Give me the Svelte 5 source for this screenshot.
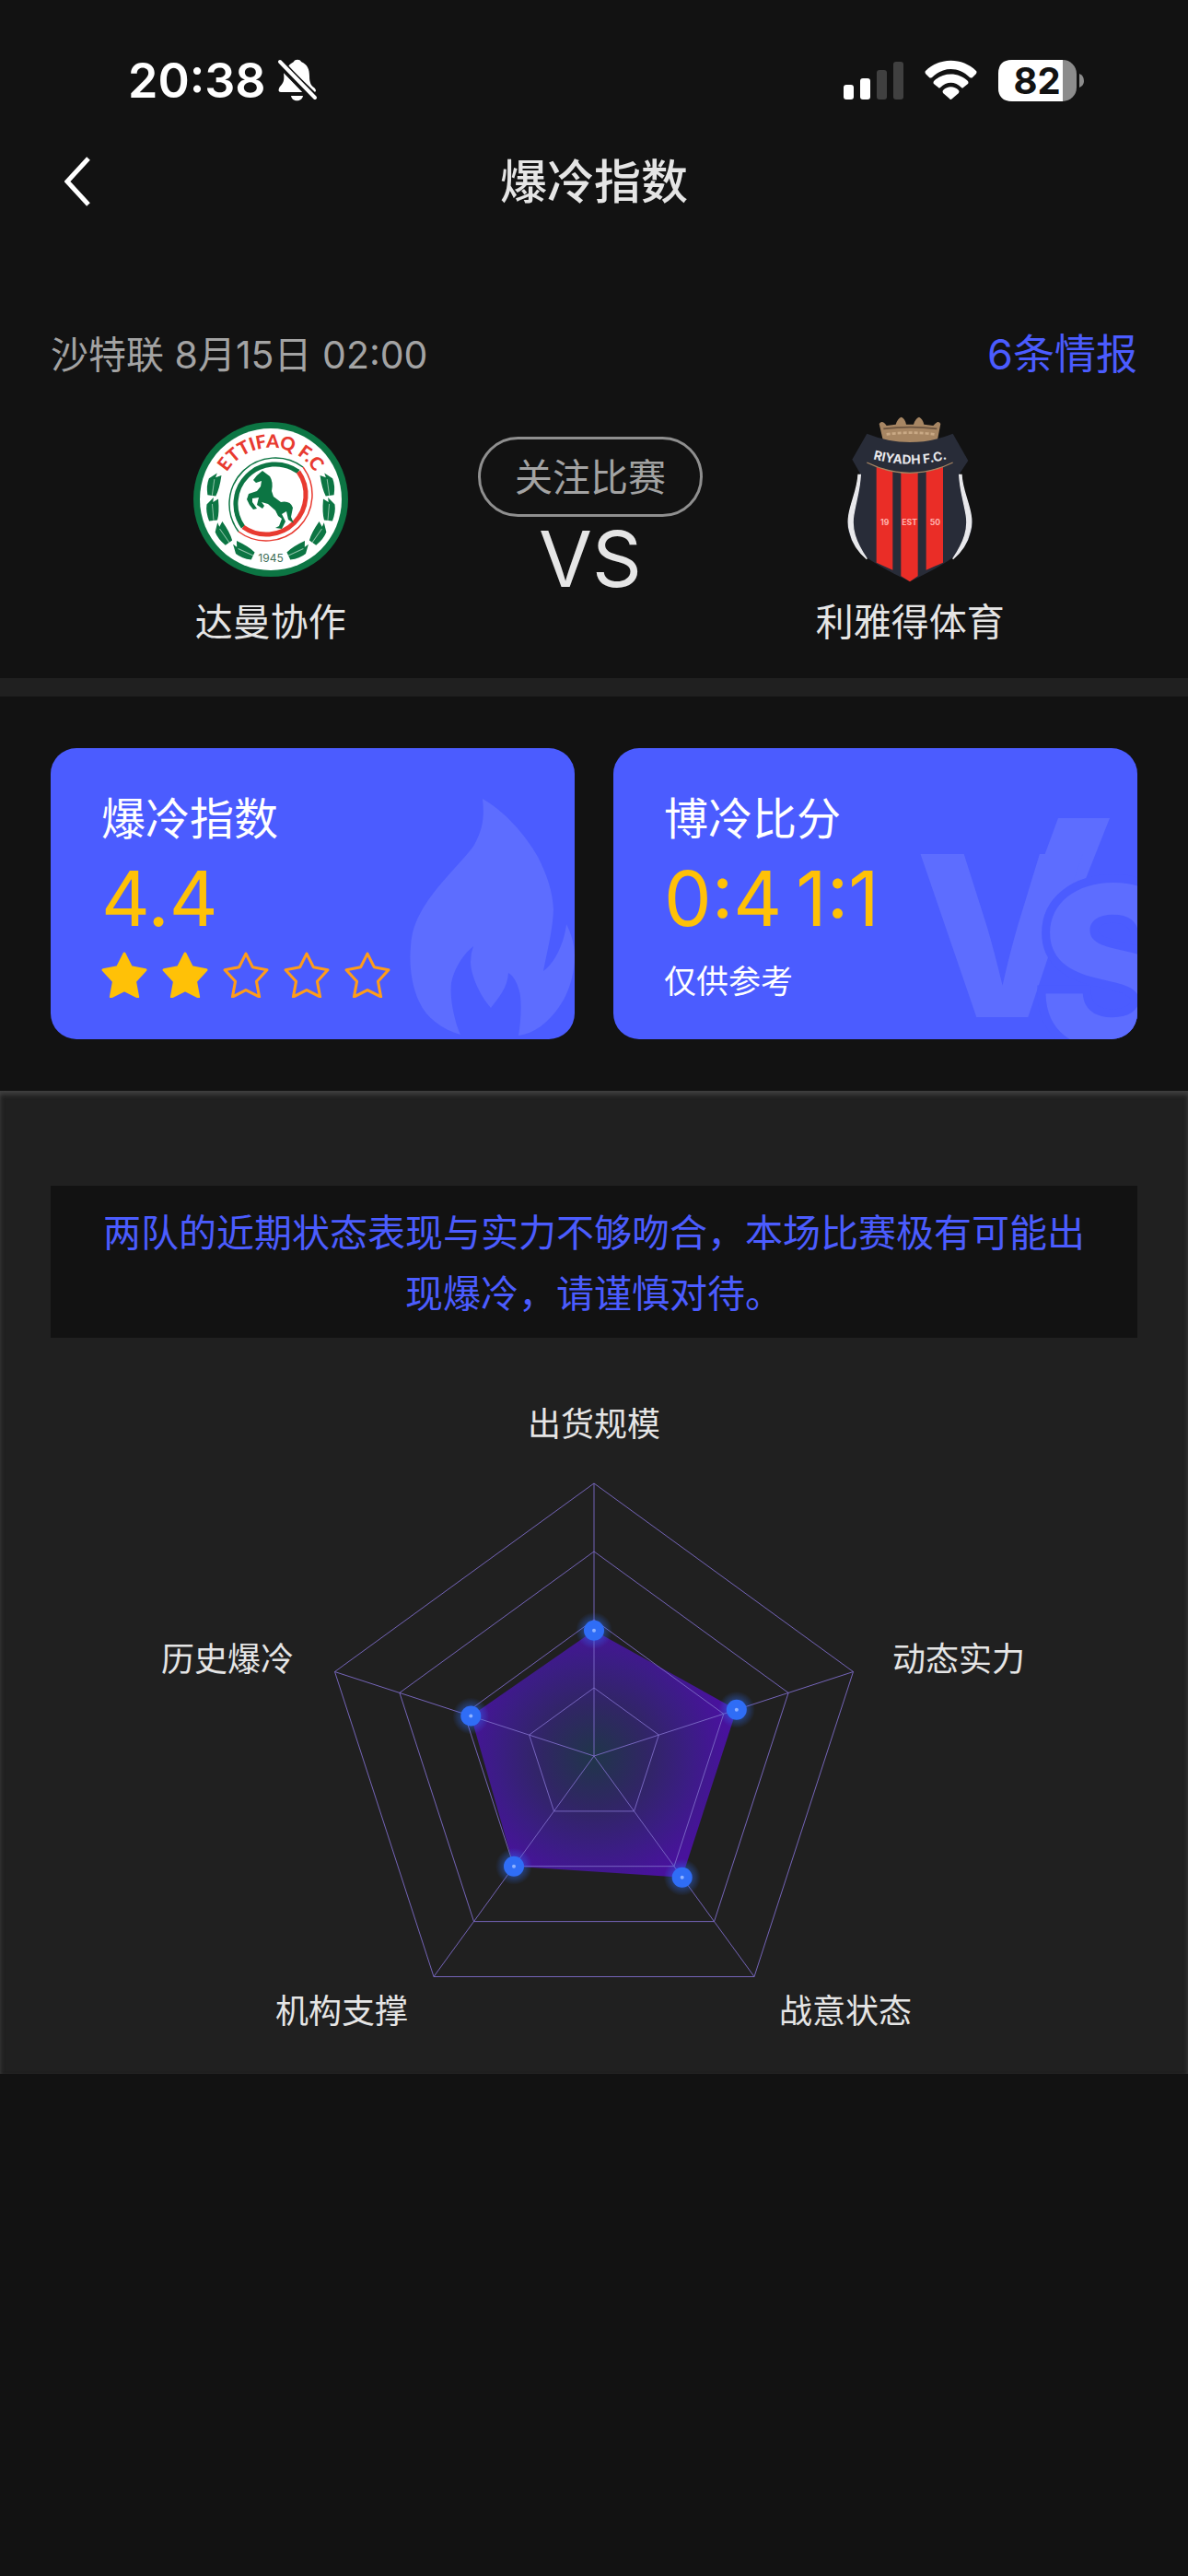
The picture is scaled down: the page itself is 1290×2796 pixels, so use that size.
<script>
  const team = { league: '沙特联', time: '8月15日 02:00', home: '达曼协作', away: '利雅得体育' };
  const scores = ['0:4', '1:1'];
  const stars = [true, true, false, false, false];

  const cx = 645;
  const cy = 454;
  const radius = 296;
  const axes = [
    { name: '出货规模', value: 0.46, x: 645, y: 107, anchor: 'middle' },
    { name: '动态实力', value: 0.55, x: 969, y: 362, anchor: 'start' },
    { name: '战意状态', value: 0.55, x: 846, y: 744, anchor: 'start' },
    { name: '机构支撑', value: 0.5, x: 443, y: 744, anchor: 'end' },
    { name: '历史爆冷', value: 0.475, x: 319, y: 362, anchor: 'end' }
  ];

  function point(index, ratio) {
    const angle = (index * 72 - 90) * Math.PI / 180;
    return { x: cx + Math.cos(angle) * radius * ratio, y: cy + Math.sin(angle) * radius * ratio };
  }
  const toPoints = (list) => list.map((p) => `${p.x.toFixed(1)},${p.y.toFixed(1)}`).join(' ');
  const rings = [0.25, 0.5, 0.75, 1].map((r) => toPoints(axes.map((_, i) => point(i, r))));
  const dots = axes.map((a, i) => point(i, a.value));
  const spokes = axes.map((_, i) => point(i, 1));

  const leaves = [
    [-62, -16, 8], [-63, 11, -5], [-52, 37, -35], [-30, 56, -65]
  ];
  const starPath = 'M24 2 L31 16 L46 19 L35 31 L38 47 L24 40 L10 47 L13 31 L2 19 L17 16 Z';
</script>

<div class="page" lang="zh-CN">
  <header>
    <div class="status">
      <div class="clock">
        <span>20:38</span>
        <svg class="bell" width="44" height="48" viewBox="0 0 44 48" aria-hidden="true">
          <path fill="#fff" d="M12 9 C14 6 17 5 18 4 C19 1 25 1 26 4 C33 7 35 12 35 20 C35 27 37 30 40 32 C43 35 42 36 41 37 Z M7 16 L28 37 H4 C1 37 1 34 3 31 C7 27 8 24 7 16 Z M15 41 H28 C27 48 16 48 15 41 Z" />
          <path d="M3 5 L40 44" stroke="#121212" stroke-width="9" />
          <path d="M3 4 L41 43" stroke="#fff" stroke-width="4" stroke-linecap="round" />
        </svg>
      </div>
      <svg width="264" height="48" viewBox="914 62 264 48" role="img" aria-label="信号 电量 82">
        <rect x="916" y="91" width="11" height="16" rx="3" fill="#fff" />
        <rect x="934" y="84" width="11" height="23" rx="3" fill="#fff" />
        <rect x="952" y="75" width="11" height="32" rx="3" fill="#404040" />
        <rect x="970" y="66" width="11" height="41" rx="3" fill="#404040" />
        <g fill="#fff">
          <path d="M1005 76 C1020 61 1045 61 1060 76 Q1061 77 1060 79 L1056 83 Q1055 84 1053 83 C1041 71 1024 71 1012 83 Q1010 84 1009 83 L1005 79 Q1004 77 1005 76 Z" />
          <path d="M1014 87 C1024 77 1041 77 1051 87 Q1052 89 1051 90 L1046 94 Q1045 95 1044 94 C1037 87 1028 87 1021 94 Q1020 95 1019 94 L1014 90 Q1013 89 1014 87 Z" />
          <path d="M1024 97 C1029 92 1036 92 1041 97 Q1042 98 1041 100 L1034 106 Q1032 108 1031 106 L1024 100 Q1023 98 1024 97 Z" />
        </g>
        <rect x="1084" y="64" width="85" height="45" rx="15" fill="#8c8c8c" />
        <path d="M1099 64 H1154 V109 H1099 Q1084 109 1084 94 V79 Q1084 64 1099 64 Z" fill="#fff" />
        <path d="M1172 79 Q1177 81 1177 87 Q1177 92 1172 94 Z" fill="#8c8c8c" />
        <text class="charge" x="1126" y="101" text-anchor="middle">82</text>
      </svg>
    </div>
    <nav>
      <button class="back" aria-label="返回">
        <svg width="30" height="56" viewBox="0 0 30 56"><path d="M26 2 L3 27 L26 52" fill="none" stroke="#fff" stroke-width="5" /></svg>
      </button>
      <h1>爆冷指数</h1>
    </nav>
  </header>

  <section class="match">
    <div class="info">
      <span>{team.league} {team.time}</span>
      <a href="#intel">6条情报</a>
    </div>
    <div class="teams">
      <div class="team">
        <svg width="180" height="180" viewBox="-5 -5 180 180" aria-hidden="true">
          <circle cx="85" cy="85" r="84" fill="#0c7543" />
          <circle cx="85" cy="85" r="77" fill="#fff" />
          <g fill="none">
            <g stroke="#0c7543">
              <path d="M120 50 A50 50 0 0 0 50 120" stroke-width="1.5" />
              <path d="M115 55 A43 43 0 0 0 55 115" stroke-width="5" />
            </g>
            <g stroke="#e83a30">
              <path d="M120 50 A50 50 0 0 1 50 120" stroke-width="1.5" />
              <path d="M115 55 A43 43 0 0 1 55 115" stroke-width="5" />
            </g>
            <path id="arc" d="M29 85 A56 56 0 0 1 141 85" />
          </g>
          <text class="crest-arc"><textPath href="#arc" startOffset="50%" text-anchor="middle">ETTIFAQ F.C</textPath></text>
          {#each [1, -1] as side}
            <g transform={`translate(85 85) scale(${side} 1)`}>
              {#each leaves as [x, y, turn]}
                <g transform={`translate(${x} ${y}) rotate(${turn})`}>
                  <path d="M2 -13 L1 -8 L7 -11 Q7 4 4 12 L-5 12 Q-8 2 -6 -6 Z" fill="#0c7543" />
                  <path d="M0 -6 V12" stroke="#8fc2a8" stroke-width="1" />
                </g>
              {/each}
            </g>
          {/each}
          <path fill="#0c7543" d="M76 54 L70 59 L66 64 L69 67 L75 65 L74 71 L70 76 L61 79 L59 85 L62 91 L66 96 L70 95 L65 88 L65 84 L72 83 L70 91 L76 95 L78 92 L75 88 L82 90 L90 97 L93 103 L97 106 L94 114 L90 116 L97 117 L101 109 L97 101 L102 98 L104 107 L110 111 L107 104 L109 94 Q106 86 96 88 L88 82 L86 76 Q88 66 84 60 Z" />
          <text class="crest-year" x="85" y="153" text-anchor="middle">1945</text>
        </svg>
        <span>{team.home}</span>
      </div>
      <div class="centre">
        <button class="follow">关注比赛</button>
        <strong>VS</strong>
      </div>
      <div class="team">
        <svg width="180" height="180" viewBox="120 66 540 540" aria-hidden="true">
          <path fill="#a78663" d="M302 142 L290 90 Q300 76 314 96 L344 92 Q350 72 362 68 Q374 72 378 92 L402 92 Q408 72 420 68 Q432 74 436 92 L466 96 Q482 76 490 90 L480 142 Q392 164 302 142 Z" />
          <path d="M304 106 Q392 96 478 106" fill="none" stroke="#6c543f" stroke-width="5" />
          <path d="M314 124 Q392 114 470 124" fill="none" stroke="#c9a985" stroke-width="8" stroke-dasharray="12 6" />
          <path fill="#282c38" d="M250 122 Q390 178 530 122 L580 210 L552 252 C566 330 600 370 592 430 C580 500 540 530 390 604 C240 530 200 500 188 430 C184 370 214 330 228 252 L202 206 Z" />
          <path fill="#ea2d27" d="M281 230 L334 244 V566 L281 542 Z M361 248 H416 V586 L390 604 L361 586 Z M443 244 L498 230 V542 L443 566 Z" />
          <path fill="#282c38" d="M260 216 Q390 284 520 216 Z" />
          <path d="M250 216 Q390 284 530 216" fill="none" stroke="#a78663" stroke-width="4" />
          <path d="M222 256 C220 320 176 380 194 440 C204 484 228 512 250 530 C210 470 200 430 206 390 C214 340 226 310 229 256 Z M558 256 C560 320 604 380 586 440 C576 484 552 512 530 530 C570 470 580 430 574 390 C566 340 554 310 551 256 Z" fill="#e9e9ec" stroke="#e9e9ec" stroke-width="4" />
          <path id="riyadh" d="M262 202 Q390 240 520 202" fill="none" />
          <text class="riyadh"><textPath href="#riyadh" startOffset="50%" text-anchor="middle">RIYADH F.C.</textPath></text>
          <g class="est" text-anchor="middle">
            <text x="308" y="420">19</text><text x="389" y="420">EST</text><text x="472" y="420">50</text>
          </g>
        </svg>
        <span>{team.away}</span>
      </div>
    </div>
  </section>

  <section class="cards">
    <article>
      <svg class="art flame" width="179" height="257" viewBox="0 0 179 257" aria-hidden="true">
        <path fill="#5d6dff" d="M79 0 C101 12 125 38 139 63 C149 83 155 100 156 120 C155 145 149 165 145 187 C158 178 168 155 170 136 C176 148 179 160 179 170 C179 195 170 215 162 226 C150 243 135 255 118 257 C121 240 122 215 118 206 C116 198 112 192 107 189 C106 205 97 215 88 227 C75 212 66 190 66 177 Q66 168 69 160 C57 170 48 185 45 200 C43 220 50 245 55 256 C35 250 18 238 10 220 C2 203 -1 180 1 160 C2 140 10 125 20 110 C35 88 60 65 70 50 C80 32 81 18 79 0 Z" />
      </svg>
      <h2>爆冷指数</h2>
      <p class="figure">4.4</p>
      <div class="stars" role="img" aria-label="2 / 5">
        {#each stars as on}
          <svg width="50" height="50" viewBox="0 0 48 48"><path class:on d={starPath} /></svg>
        {/each}
      </div>
    </article>
    <article>
      <svg class="art versus" width="240" height="240" viewBox="0 0 240 240" aria-hidden="true">
        <path fill="#5d6dff" d="M152 0 H208 L166 106 H113 Z" />
        <text x="-3" y="216">V</text>
        <text class="over" x="130" y="249">S</text>
      </svg>
      <h2>博冷比分</h2>
      <p class="figure">{#each scores as score}<span>{score}</span>{/each}</p>
      <p class="note">仅供参考</p>
    </article>
  </section>

  <section class="analysis">
    <p class="notice">两队的近期状态表现与实力不够吻合，本场比赛极有可能出现爆冷，请谨慎对待。</p>
    <svg class="radar" viewBox="0 0 1290 799" role="img" aria-label="爆冷指数雷达图">
      <defs>
        <radialGradient id="fill" gradientUnits="userSpaceOnUse" cx="645" cy="454" r="160">
          <stop offset="0" stop-color="#20364a" />
          <stop offset="0.35" stop-color="#302664" />
          <stop offset="0.65" stop-color="#3b1d84" />
          <stop offset="0.9" stop-color="#48129c" />
        </radialGradient>
        <radialGradient id="glow">
          <stop offset="0.45" stop-color="#2f6df6" stop-opacity="0.45" />
          <stop offset="1" stop-color="#2f6df6" stop-opacity="0" />
        </radialGradient>
      </defs>
      <polygon points={toPoints(dots)} fill="url(#fill)" />
      <g class="grid">
        {#each rings as ring}<polygon points={ring} />{/each}
        {#each spokes as end}<line x1={cx} y1={cy} x2={end.x} y2={end.y} />{/each}
      </g>
      {#each dots as dot}
        <circle cx={dot.x} cy={dot.y} r="20" fill="url(#glow)" />
        <circle cx={dot.x} cy={dot.y} r="11" fill="#2f6df6" />
        <circle cx={dot.x} cy={dot.y} r="2" fill="#8fb2ff" />
      {/each}
      {#each axes as axis}
        <text class="label" x={axis.x} y={axis.y} text-anchor={axis.anchor}>{axis.name}</text>
      {/each}
    </svg>
  </section>
</div>

<style>
  :global(body) { margin: 0; background: #121212; }
  .page {
    min-height: 100vh;
    background: #121212;
    color: #e5e5e5;
    font-family: Inter, "Noto Sans CJK SC", sans-serif;
    font-size: 41px;
  }
  h1, h2, p { margin: 0; font-weight: 400; }
  svg { display: block; }
  button { font: inherit; background: none; border: 0; padding: 0; }

  .status {
    display: flex;
    justify-content: space-between;
    align-items: center;
    height: 130px;
    padding: 44px 112px 0 139px;
    box-sizing: border-box;
    color: #fff;
  }
  .clock { display: flex; align-items: center; gap: 12px; font-size: 52px; font-weight: 600; }
  .charge { font-size: 40px; font-weight: 700; fill: #121212; }
  nav {
    display: grid;
    grid-template-columns: 1fr auto 1fr;
    align-items: center;
    height: 136px;
    padding: 0 70px;
  }
  .back { justify-self: start; }
  h1 { font-size: 51px; font-weight: 500; line-height: 72px; }

  .match { padding: 86px 0 36px; border-bottom: 20px solid #202020; }
  .info {
    display: flex;
    justify-content: space-between;
    align-items: center;
    padding: 0 55px;
    line-height: 66px;
    color: #a3a3a3;
  }
  .info a { color: #4b5cff; font-size: 45px; text-decoration: none; }
  .teams {
    display: grid;
    grid-template-columns: repeat(3, 1fr);
    padding: 34px 128px 0 120px;
  }
  .team { display: flex; flex-direction: column; align-items: center; gap: 18px; line-height: 50px; }
  .centre { display: flex; flex-direction: column; align-items: center; padding-top: 22px; }
  .follow {
    height: 87px;
    padding: 0 37px 6px;
    border: 3px solid #8f8f8f;
    border-radius: 44px;
    color: #a3a3a3;
  }
  .centre strong { font-size: 84px; font-weight: 400; line-height: 92px; }
  .crest-arc { font-family: Lato, sans-serif; font-size: 20px; font-weight: 900; fill: #e83a30; }
  .crest-year { font-size: 12px; fill: #3f6f58; }
  .riyadh { font-size: 41px; font-weight: 700; fill: #e9e9ec; }
  .est { font-size: 26px; font-weight: 700; fill: #ffb3ae; }

  .cards { display: grid; grid-template-columns: 1fr 1fr; gap: 42px; padding: 56px 55px; }
  article {
    position: relative;
    height: 316px;
    padding: 43px 55px 0;
    box-sizing: border-box;
    overflow: hidden;
    border-radius: 28px;
    background: #4b5cff;
    color: #fff;
  }
  h2 { position: relative; font-size: 48px; line-height: 68px; }
  .figure { position: relative; display: flex; gap: 15px; font-size: 82px; line-height: 106px; color: #ffc107; }
  .note { margin-top: 16px; font-size: 35px; line-height: 40px; }
  .art { position: absolute; right: 0; bottom: 4px; }
  .versus { right: -2px; bottom: 0; overflow: visible; }
  .versus text { font-size: 243px; font-weight: 800; fill: #5d6dff; }
  .versus .over { stroke: #4b5cff; stroke-width: 18px; paint-order: stroke; }
  .stars { position: relative; display: flex; gap: 16px; margin-top: 4px; }
  .stars path { fill: none; stroke: #ff9c1a; stroke-width: 3; stroke-linejoin: round; }
  .stars path.on { fill: #ffc107; stroke: #ffc107; }

  .analysis {
    padding-top: 103px;
    background: #202020;
    box-shadow: inset 0 4px 5px #404040, inset 0 0 3px #2a2a2a;
  }
  .notice {
    margin: 0 55px;
    padding: 18px 53px 15px;
    background: #121212;
    color: #4b5cff;
    line-height: 66px;
    text-align: center;
  }
  .radar { width: 100%; }
  .grid { fill: none; stroke: #7d6cc8; stroke-opacity: 0.9; stroke-width: 1; }
  .label { font-size: 36px; fill: #e5e5e5; }
</style>
